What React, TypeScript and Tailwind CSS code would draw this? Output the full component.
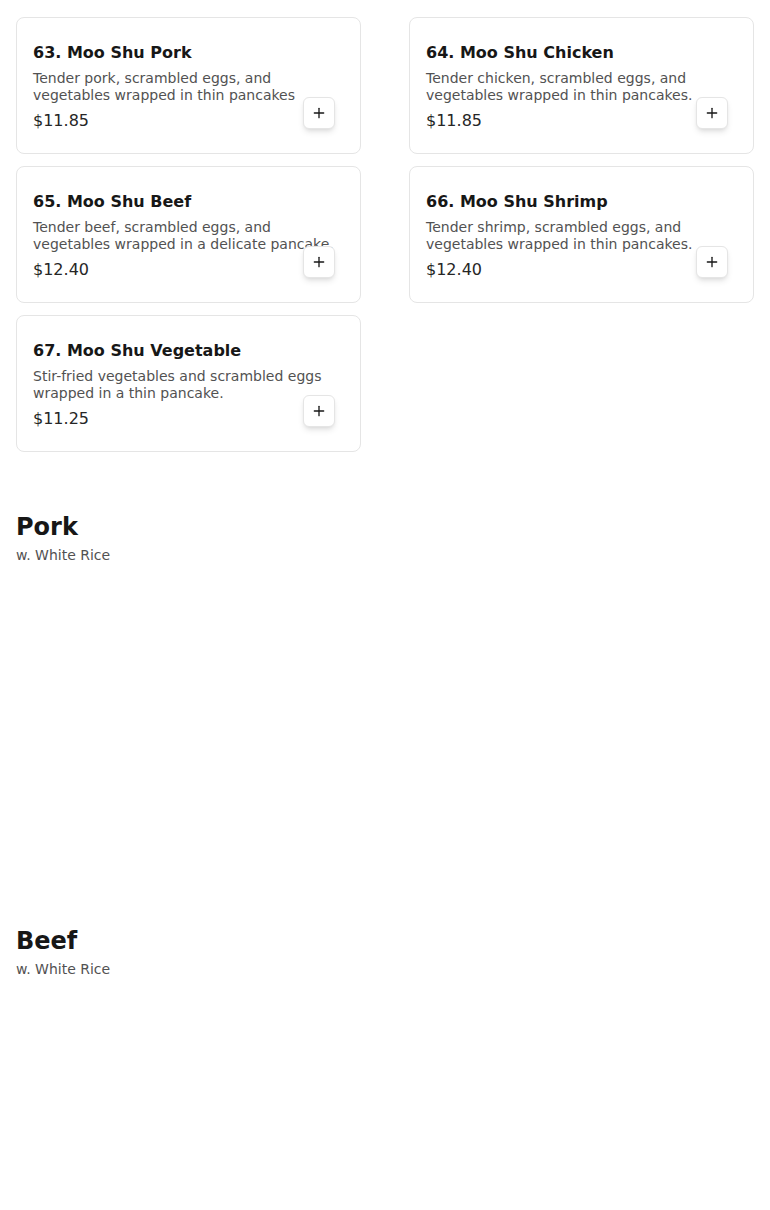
import { Plus } from "lucide-react";

interface MenuItem {
  id: number;
  nome: string;
  descricao: string;
  preco: string;
}

const mooShu: MenuItem[] = [
  { id: 63, nome: "Moo Shu Pork", descricao: "Tender pork, scrambled eggs, and vegetables wrapped in thin pancakes", preco: "$11.85" },
  { id: 64, nome: "Moo Shu Chicken", descricao: "Tender chicken, scrambled eggs, and vegetables wrapped in thin pancakes.", preco: "$11.85" },
  { id: 65, nome: "Moo Shu Beef", descricao: "Tender beef, scrambled eggs, and vegetables wrapped in a delicate pancake.", preco: "$12.40" },
  { id: 66, nome: "Moo Shu Shrimp", descricao: "Tender shrimp, scrambled eggs, and vegetables wrapped in thin pancakes.", preco: "$12.40" },
  { id: 67, nome: "Moo Shu Vegetable", descricao: "Stir-fried vegetables and scrambled eggs wrapped in a thin pancake.", preco: "$11.25" },
];

function ItemCard({ item }: { item: MenuItem }) {
  return (
    <div className="relative h-[137px] rounded-lg border border-neutral-200 bg-white px-4 pt-[23px]">
      <h3 className="text-base font-bold leading-6 text-neutral-900">
        {item.id}. {item.nome}
      </h3>
      <p className="mt-[5px] text-sm leading-[17px] text-neutral-600">{item.descricao}</p>
      <p className="mt-[5px] text-base leading-6 text-neutral-800">{item.preco}</p>
      <button className="absolute right-[25px] bottom-6 flex h-8 w-8 items-center justify-center rounded-md border border-neutral-200 bg-white text-neutral-900 shadow-md">
        <Plus size={16} strokeWidth={2} />
      </button>
    </div>
  );
}

export default function App() {
  return (
    <div className="min-h-[1210px] bg-white px-4 pt-[17px] font-['DejaVu_Sans',sans-serif]">
      <div className="grid grid-cols-2 gap-x-12 gap-y-3">
        {mooShu.map((item) => (
          <ItemCard key={item.id} item={item} />
        ))}
      </div>

      <section className="mt-[59px]">
        <h2 className="text-2xl leading-8 font-bold text-neutral-900">Pork</h2>
        <p className="mt-0.5 text-sm leading-5 text-neutral-600">w. White Rice</p>
        {/* itens ainda não carregados */}
        <div className="h-[360px]" />
      </section>

      <section>
        <h2 className="text-2xl leading-8 font-bold text-neutral-900">Beef</h2>
        <p className="mt-0.5 text-sm leading-5 text-neutral-600">w. White Rice</p>
      </section>
    </div>
  );
}
